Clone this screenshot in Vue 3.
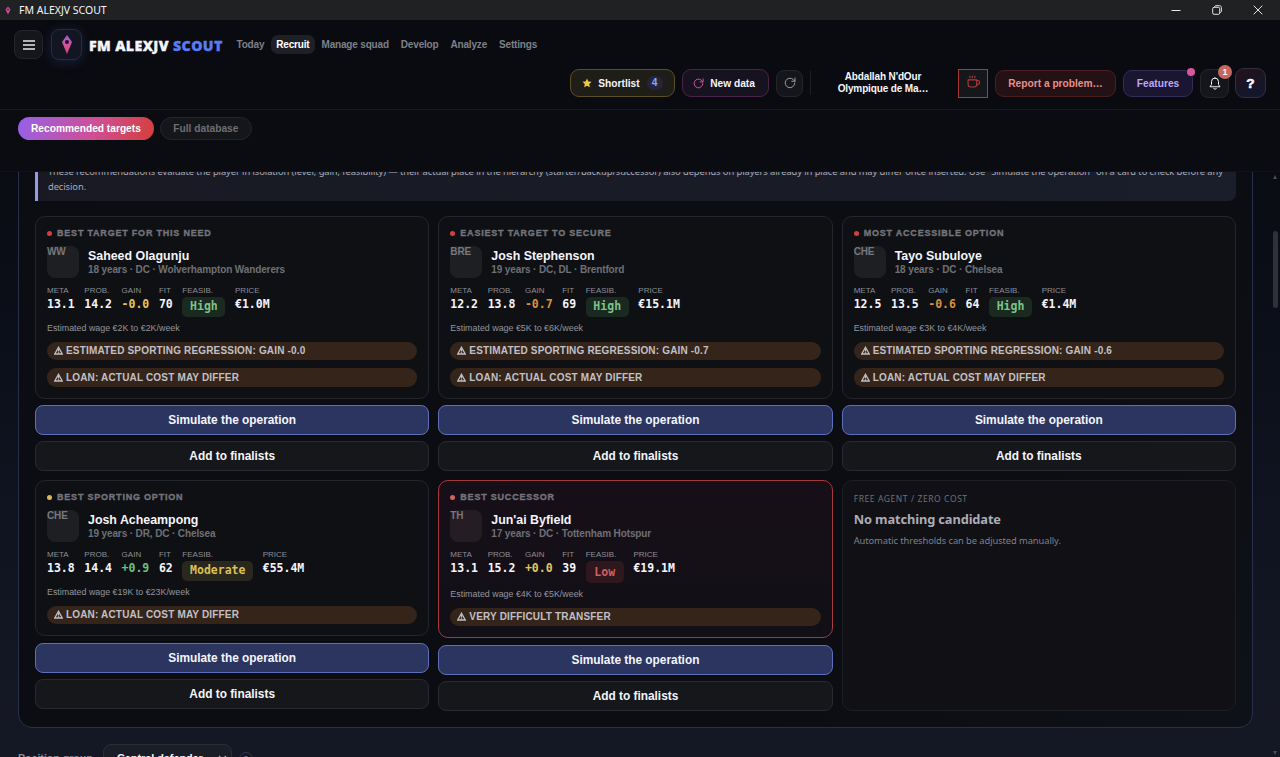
<template>
  <div class="app">
    <div class="titlebar">
      <svg class="titlebar-logo" viewBox="0 0 12 16">
        <path d="M6 0 L11 6 L6 16 L1 6 Z" fill="#d04a9c" />
        <circle cx="6" cy="6" r="1.6" fill="#141521" />
      </svg>
      <span class="titlebar-name">FM ALEXJV SCOUT</span>
      <div class="window-controls">
        <svg width="10" height="10" viewBox="0 0 10 10"><path d="M.5 5.5h9" /></svg>
        <svg width="10" height="10" viewBox="0 0 10 10">
          <rect x=".7" y="2.3" width="7" height="7" rx="1.4" />
          <path d="M2.6 2.2C2.6 1.2 3.1.7 4 .7h3.4c1.3 0 2 .7 2 2v3.4c0 .9-.5 1.4-1.5 1.4" />
        </svg>
        <svg width="10" height="10" viewBox="0 0 10 10"><path d="M.7.7l8.6 8.6M9.3.7L.7 9.3" /></svg>
      </div>
    </div>

    <header class="header">
      <div class="header-top">
        <button class="icon-btn menu-btn">
          <svg width="12" height="10" viewBox="0 0 12 10"><path d="M0 1h12M0 5h12M0 9h12" /></svg>
        </button>
        <div class="logo-box">
          <svg width="12" height="19" viewBox="0 0 12 19">
            <defs>
              <linearGradient id="pin" x1="0" y1="0" x2="0" y2="1">
                <stop offset="0" stop-color="#9a5ad6" />
                <stop offset=".5" stop-color="#d6539b" />
                <stop offset="1" stop-color="#d2457c" />
              </linearGradient>
            </defs>
            <path d="M6 0 L11 7 L6 19 L1 7 Z" fill="url(#pin)" />
            <circle cx="6" cy="7" r="2" fill="#171526" />
          </svg>
        </div>
        <div class="brand">FM ALEXJV <span>SCOUT</span></div>
        <nav class="nav">
          <a v-for="item in navItems" :key="item" :class="{ active: item === 'Recruit' }">{{ item }}</a>
        </nav>
      </div>

      <div class="header-tools">
        <button class="tool shortlist">
          <svg width="10" height="10" viewBox="0 0 24 24">
            <path d="M12 1l3.3 7.2 7.7.9-5.7 5.3 1.5 7.7L12 18.3l-6.8 3.8 1.5-7.7L1 9.1l7.7-.9z" fill="#ecca45" />
          </svg>
          Shortlist
          <span class="count">4</span>
        </button>
        <button class="tool new-data">
          <svg width="11" height="11" viewBox="0 0 24 24" class="stroke-icon">
            <path d="M21.5 12a9.5 9.5 0 1 1-3-7L22 8.5" /><path d="M22 2v6.5h-6.5" />
          </svg>
          New data
        </button>
        <button class="icon-btn refresh-btn">
          <svg width="12" height="12" viewBox="0 0 24 24" class="stroke-icon">
            <path d="M21.5 12a9.5 9.5 0 1 1-3-7L22 8.5" /><path d="M22 2v6.5h-6.5" />
          </svg>
        </button>
        <span class="divider"></span>
        <div class="account">
          <div>Abdallah N'dOur</div>
          <div>Olympique de Ma…</div>
        </div>
        <button class="coffee-btn">
          <svg width="13" height="13" viewBox="0 0 24 24" class="stroke-icon">
            <path d="M2 9h16v8a5 5 0 0 1-5 5H7a5 5 0 0 1-5-5z" />
            <path d="M18 10h2a3 3 0 0 1 3 3v1a4 4 0 0 1-4 4h-1" />
            <path d="M5.5 5V2M10 5V2M14.5 5V2" />
          </svg>
        </button>
        <button class="tool report">Report a problem…</button>
        <button class="tool features">Features<span class="dot"></span></button>
        <button class="icon-btn bell-btn">
          <svg width="12" height="13" viewBox="0 0 24 26" class="stroke-icon">
            <path d="M12 2a7 7 0 0 0-7 7v6l-3 4.5h20L19 15V9a7 7 0 0 0-7-7z" />
            <path d="M9.5 23a2.8 2.8 0 0 0 5 0" />
          </svg>
          <span class="badge">1</span>
        </button>
        <button class="help-btn">?</button>
      </div>
    </header>

    <div class="tabs">
      <button class="tab active">Recommended targets</button>
      <button class="tab">Full database</button>
    </div>

    <main class="content">
      <section class="panel">
        <div class="note">
          <div class="note-line">These recommendations evaluate the player in isolation (level, gain, feasibility) — their actual place in the hierarchy (starter/backup/successor) also depends on players already in place and may differ once inserted. Use "Simulate the operation" on a card to check before any</div>
          <div>decision.</div>
        </div>

        <div class="grid">
          <div v-for="card in cards" :key="card.title" class="slot">
            <article class="card" :class="{ danger: card.feasibility === 'Low' }">
              <div class="card-title"><i :class="card.dot"></i>{{ card.title }}</div>
              <div class="player">
                <div class="crest">{{ card.crest }}</div>
                <div>
                  <div class="player-name">{{ card.name }}</div>
                  <div class="player-sub">{{ card.info }}</div>
                </div>
              </div>
              <div class="stats">
                <div><label>META</label><b>{{ card.meta }}</b></div>
                <div><label>PROB.</label><b>{{ card.prob }}</b></div>
                <div><label>GAIN</label><b :class="card.gainTone">{{ card.gain }}</b></div>
                <div><label>FIT</label><b>{{ card.fit }}</b></div>
                <div class="feasib">
                  <label>FEASIB.</label>
                  <span class="pill" :class="card.feasibility.toLowerCase()">{{ card.feasibility }}</span>
                </div>
                <div><label>PRICE</label><b>{{ card.price }}</b></div>
              </div>
              <div class="wage">Estimated wage {{ card.wage }}/week</div>
              <div class="warnings">
                <div v-for="warning in card.warnings" :key="warning" class="warning">
                  <svg width="9" height="9" viewBox="0 0 18 18">
                    <path d="M9 2.5L16.5 16H1.5z" /><path d="M9 6v5M9 12.5V15" />
                  </svg>
                  {{ warning }}
                </div>
              </div>
            </article>
            <button class="action primary">Simulate the operation</button>
            <button class="action">Add to finalists</button>
          </div>

          <article class="card empty">
            <div class="empty-kicker">FREE AGENT / ZERO COST</div>
            <div class="empty-title">No matching candidate</div>
            <div class="empty-text">Automatic thresholds can be adjusted manually.</div>
          </article>
        </div>
      </section>

      <div class="filters">
        <span class="filter-label">Position group</span>
        <div class="select">
          Central defender
          <svg width="9" height="6" viewBox="0 0 9 6"><path d="M1 1l3.5 3.5L8 1" /></svg>
        </div>
        <span class="hint">?</span>
      </div>

      <div class="scrollbar">
        <i class="arrow up"></i>
        <i class="thumb"></i>
        <i class="arrow down"></i>
      </div>
    </main>
  </div>
</template>

<script setup>
const navItems = ['Today', 'Recruit', 'Manage squad', 'Develop', 'Analyze', 'Settings'];

const LOAN = 'LOAN: ACTUAL COST MAY DIFFER';

const cards = [
  {
    title: 'BEST TARGET FOR THIS NEED',
    dot: 'red',
    crest: 'WW',
    name: 'Saheed Olagunju',
    info: '18 years · DC · Wolverhampton Wanderers',
    meta: '13.1',
    prob: '14.2',
    gain: '-0.0',
    gainTone: 'flat',
    fit: 70,
    feasibility: 'High',
    price: '€1.0M',
    wage: '€2K to €2K',
    warnings: ['ESTIMATED SPORTING REGRESSION: GAIN -0.0', LOAN]
  },
  {
    title: 'EASIEST TARGET TO SECURE',
    dot: 'red',
    crest: 'BRE',
    name: 'Josh Stephenson',
    info: '19 years · DC, DL · Brentford',
    meta: '12.2',
    prob: '13.8',
    gain: '-0.7',
    gainTone: 'loss',
    fit: 69,
    feasibility: 'High',
    price: '€15.1M',
    wage: '€5K to €6K',
    warnings: ['ESTIMATED SPORTING REGRESSION: GAIN -0.7', LOAN]
  },
  {
    title: 'MOST ACCESSIBLE OPTION',
    dot: 'red',
    crest: 'CHE',
    name: 'Tayo Subuloye',
    info: '18 years · DC · Chelsea',
    meta: '12.5',
    prob: '13.5',
    gain: '-0.6',
    gainTone: 'loss',
    fit: 64,
    feasibility: 'High',
    price: '€1.4M',
    wage: '€3K to €4K',
    warnings: ['ESTIMATED SPORTING REGRESSION: GAIN -0.6', LOAN]
  },
  {
    title: 'BEST SPORTING OPTION',
    dot: 'amber',
    crest: 'CHE',
    name: 'Josh Acheampong',
    info: '19 years · DR, DC · Chelsea',
    meta: '13.8',
    prob: '14.4',
    gain: '+0.9',
    gainTone: 'up',
    fit: 62,
    feasibility: 'Moderate',
    price: '€55.4M',
    wage: '€19K to €23K',
    warnings: [LOAN]
  },
  {
    title: 'BEST SUCCESSOR',
    dot: 'rose',
    crest: 'TH',
    name: "Jun'ai Byfield",
    info: '17 years · DC · Tottenham Hotspur',
    meta: '13.1',
    prob: '15.2',
    gain: '+0.0',
    gainTone: 'flat',
    fit: 39,
    feasibility: 'Low',
    price: '€19.1M',
    wage: '€4K to €5K',
    warnings: ['VERY DIFFICULT TRANSFER']
  }
];
</script>

<style>
body {
  background: #0a0c11;
  overflow: hidden;
}
</style>

<style scoped>
* {
  box-sizing: border-box;
}

.app {
  width: 1280px;
  height: 757px;
  display: flex;
  flex-direction: column;
  overflow: hidden;
  background: #0a0b10;
  color: #f4f5fa;
  font-family: "Liberation Sans", Arial, sans-serif;
  font-size: 10.2px;
}

button {
  margin: 0;
  padding: 0;
  font: inherit;
  font-weight: 700;
  color: inherit;
  white-space: nowrap;
}

svg {
  display: block;
  flex: none;
}

.stroke-icon {
  fill: none;
  stroke: currentColor;
  stroke-width: 2;
  stroke-linecap: round;
  stroke-linejoin: round;
}

.titlebar {
  flex: none;
  height: 20px;
  display: flex;
  align-items: center;
  padding: 0 17px 0 5px;
  background: #202123;
}

.titlebar-logo {
  width: 6px;
  height: 9px;
}

.titlebar-name {
  margin-left: 8px;
  font-family: "Noto Sans", sans-serif;
  font-size: 10.5px;
}

.window-controls {
  margin-left: auto;
  display: flex;
  gap: 31px;
  fill: none;
  stroke: #e6e6e8;
  stroke-width: 1;
}

.header {
  flex: none;
  height: 90px;
  padding: 9px 14px 0;
  border-bottom: 1px solid #17191f;
}

.header-top {
  display: flex;
  align-items: center;
  height: 31px;
}

.icon-btn {
  display: flex;
  align-items: center;
  justify-content: center;
  background: #15161b;
  border: 1px solid #25262c;
  border-radius: 8px;
}

.menu-btn {
  width: 29px;
  height: 29px;
}

.menu-btn svg {
  stroke: #e8e9ee;
  stroke-width: 1.3;
}

.logo-box {
  width: 31px;
  height: 31px;
  margin-left: 8px;
  display: flex;
  align-items: center;
  justify-content: center;
  background: #131522;
  border: 1px solid #292c3c;
  border-radius: 8px;
  box-shadow: 0 2px 12px rgba(70, 90, 200, 0.25);
}

.brand {
  width: 134px;
  margin: 1px 0 0 7px;
  font-family: "Open Sans", "Noto Sans", sans-serif;
  font-size: 14.2px;
  font-weight: 800;
  letter-spacing: 0.38px;
  white-space: nowrap;
  -webkit-text-stroke: 0.3px;
}

.brand span {
  color: #5b7bf5;
}

.nav {
  display: flex;
  gap: 2px;
  margin-left: 8.5px;
  font-size: 10px;
  font-weight: 700;
  letter-spacing: -0.18px;
  color: #7e8087;
}

.nav a {
  height: 19px;
  padding: 0 5px;
  line-height: 19px;
  border-radius: 7px;
}

.nav .active {
  color: #fff;
  background: #1f2024;
}

.header-tools {
  display: flex;
  align-items: center;
  justify-content: flex-end;
  height: 30px;
  margin-top: 8px;
}

.tool {
  display: flex;
  align-items: center;
  justify-content: center;
  height: 28px;
  border: 1px solid;
  border-radius: 9px;
}

.shortlist {
  width: 105px;
  gap: 6px;
  background: #1f1d17;
  border-color: #5a4e22;
}

.shortlist .count {
  width: 16px;
  height: 14px;
  margin-left: 1px;
  border-radius: 7px;
  line-height: 14px;
  color: #8ba3ff;
  background: #24253a;
}

.new-data {
  width: 87px;
  margin-left: 7px;
  padding-right: 3px;
  gap: 6px;
  background: #171220;
  border-color: #4a2448;
}

.new-data svg {
  color: #e0569f;
}

.refresh-btn {
  width: 27px;
  height: 27px;
  margin-left: 7px;
  color: #9b9ca3;
}

.divider {
  width: 1px;
  height: 24px;
  margin-left: 7px;
  background: #1d1f25;
}

.account {
  width: 100px;
  margin: 0 25px 0 22px;
  font-size: 10px;
  font-weight: 700;
  line-height: 12px;
  letter-spacing: -0.13px;
  text-align: center;
  white-space: nowrap;
}

.coffee-btn {
  width: 30px;
  height: 29px;
  display: flex;
  align-items: center;
  justify-content: center;
  padding-bottom: 4px;
  color: #b03c3a;
  background: #15171b;
  border: 1px solid #a83a37;
}

.report {
  width: 121px;
  height: 27px;
  margin-left: 7px;
  color: #e5918b;
  background: #241115;
  border-color: #4b1f21;
}

.features {
  position: relative;
  width: 70px;
  height: 27px;
  margin-left: 7px;
  color: #bda6f5;
  background: #1a1530;
  border-color: #352c55;
}

.features .dot {
  position: absolute;
  top: -3px;
  right: -3px;
  width: 8px;
  height: 8px;
  border-radius: 50%;
  background: #d8559f;
}

.bell-btn {
  position: relative;
  width: 29px;
  height: 29px;
  margin-left: 7px;
}

.badge {
  position: absolute;
  top: -5px;
  right: -4px;
  width: 14px;
  height: 14px;
  border-radius: 50%;
  font-size: 9px;
  line-height: 14px;
  text-align: center;
  background: #c4685d;
}

.help-btn {
  width: 31px;
  height: 30px;
  margin-left: 6px;
  font-size: 13.6px;
  border: 1px solid #33303c;
  border-radius: 9px;
  -webkit-text-stroke: 0.6px #fff;
  background: linear-gradient(160deg, #221219, #121730);
}

.tabs {
  flex: none;
  display: flex;
  align-items: flex-start;
  gap: 6px;
  height: 62px;
  padding: 7px 18px 0;
  background: #0b0c11;
  border-bottom: 1px solid #101217;
}

.tab {
  height: 23px;
  padding: 0 12.5px;
  color: #6d6e74;
  background: #15161a;
  border: 1px solid #25262b;
  border-radius: 12px;
}

.tab.active {
  padding: 0 13px;
  color: #fff;
  border: 0;
  background: linear-gradient(110deg, #9561ea, #cf4f96 55%, #d43e3a);
}

.content {
  position: relative;
  flex: 1;
  min-height: 0;
  overflow: hidden;
  padding: 0 27px 0 18px;
  background: linear-gradient(180deg, #0a0c13 0%, #0c101b 35%, #121623 75%, #151824 100%);
}

.panel {
  margin-top: -41px;
  height: 597px;
  padding: 25px 16px 0;
  background: linear-gradient(135deg, #0c0d12 70%, #0e1118);
  border: 1px solid #27304a;
  border-radius: 14px;
}

.note {
  height: 44px;
  padding: 7px 0 0 10px;
  font-family: "Noto Sans", sans-serif;
  font-size: 9.35px;
  line-height: 15px;
  letter-spacing: -0.075px;
  color: #a9acb8;
  background: linear-gradient(90deg, #181923, #1a1e2a);
  border-left: 3px solid #949be6;
  border-radius: 0 8px 8px 0;
}

.note-line {
  white-space: nowrap;
}

.grid {
  display: grid;
  grid-template-columns: repeat(3, 1fr);
  gap: 9px;
  margin-top: 15px;
}

.slot {
  display: flex;
  flex-direction: column;
}

.card {
  padding: 11px;
  background: #0f1014;
  border: 1px solid #25262c;
  border-radius: 10px;
}

.card.danger {
  background: linear-gradient(180deg, #170f18, #120f17);
  border-color: #a5373e;
}

.card-title {
  display: flex;
  align-items: center;
  height: 10px;
  margin-top: -0.5px;
  font-size: 9px;
  font-weight: 700;
  letter-spacing: 0.79px;
  color: #73747a;
  -webkit-text-stroke: 0.35px #73747a;
}

.card-title i {
  width: 5px;
  height: 5px;
  margin: 2px 5px 0 0;
  border-radius: 50%;
}

.red {
  background: #d53f3f;
}

.amber {
  background: #e0b653;
}

.rose {
  background: #cf6263;
}

.player {
  display: flex;
  gap: 9px;
  margin-top: 8.5px;
}

.crest {
  width: 32px;
  height: 32px;
  font-size: 10px;
  font-weight: 700;
  line-height: 12px;
  letter-spacing: -0.15px;
  color: #77787d;
  background: #1e1f23;
  border-radius: 8px;
}

.danger .crest {
  background: #251d24;
}

.player-name {
  margin-top: 3px;
  font-size: 12.4px;
  font-weight: 700;
  line-height: 14px;
}

.player-sub {
  font-size: 10px;
  font-weight: 700;
  line-height: 13px;
  letter-spacing: -0.12px;
  color: #6e7076;
}

.stats {
  display: flex;
  align-items: flex-start;
  gap: 9.6px;
  margin-top: 8px;
}

.stats label {
  display: block;
  height: 11px;
  font-size: 8px;
  line-height: 10px;
  color: #8c8e96;
}

.stats b,
.pill {
  display: block;
  font-family: "DejaVu Sans Mono", monospace;
  font-size: 11.5px;
  font-weight: 700;
  line-height: 14px;
}

.flat {
  color: #e3c65c;
}

.loss {
  color: #d9923f;
}

.up {
  color: #6cc17b;
}

.feasib {
  min-width: 31px;
}

.pill {
  height: 19.5px;
  padding: 0 7.7px;
  line-height: 19.5px;
  border-radius: 5px;
}

.high {
  color: #7cc389;
  background: #1b2a20;
}

.moderate {
  color: #dcc154;
  background: #2a271e;
}

.low {
  height: 21.5px;
  padding: 0 8.7px;
  line-height: 22px;
  color: #d25e60;
  background: #2f171e;
}

.wage {
  height: 11px;
  margin-top: 6.5px;
  font-size: 8.9px;
  line-height: 11px;
  color: #93959d;
}

.warnings {
  display: flex;
  flex-direction: column;
  gap: 8px;
  margin-top: 7.5px;
}

.warning {
  display: flex;
  align-items: center;
  gap: 3px;
  height: 18.5px;
  padding-left: 7px;
  font-size: 10px;
  font-weight: 700;
  letter-spacing: 0.17px;
  color: #c1c0c6;
  background: #35241a;
  border-radius: 9px;
}

.warning svg {
  fill: none;
  stroke: currentColor;
  stroke-width: 2.6;
}

.action {
  height: 30px;
  margin-top: 6px;
  font-size: 11.87px;
  background: #15171b;
  border: 1px solid #282a2f;
  border-radius: 8px;
}

.action.primary {
  margin-top: 6.5px;
  background: #2b355f;
  border-color: #5d6fba;
}

.empty {
  background: #101015;
  border-color: #1d1e25;
  font-family: "Noto Sans", sans-serif;
}

.empty-kicker {
  font-size: 8.5px;
  line-height: 13px;
  letter-spacing: 0.58px;
  color: #6f7179;
}

.empty-title {
  margin-top: 6px;
  font-size: 12.8px;
  font-weight: 700;
  line-height: 17px;
  letter-spacing: -0.1px;
  color: #acacb6;
}

.empty-text {
  margin-top: 6px;
  font-size: 9.35px;
  line-height: 13px;
  letter-spacing: -0.08px;
  color: #7f818b;
}

.filters {
  display: flex;
  align-items: center;
  height: 29px;
  margin-top: 16px;
  font-weight: 700;
}

.filter-label {
  width: 85px;
  font-size: 10.6px;
  line-height: 12px;
  padding-bottom: 1px;
  color: #8a8c95;
}

.select {
  width: 129px;
  height: 29px;
  display: flex;
  align-items: center;
  gap: 15px;
  padding: 0 0 1px 13px;
  font-size: 10.8px;
  white-space: nowrap;
  background: #1b1d27;
  border: 1px solid #2b2e3a;
  border-radius: 8px;
}

.select svg {
  fill: none;
  stroke: #b9bbc5;
  stroke-width: 1.2;
}

.hint {
  width: 14px;
  height: 14px;
  margin-left: 7px;
  border: 1px solid #343743;
  border-radius: 50%;
  font-size: 8px;
  line-height: 12px;
  text-align: center;
  color: #777983;
}

.scrollbar {
  position: absolute;
  top: 0;
  right: 0;
  bottom: 0;
  width: 9px;
}

.scrollbar i {
  position: absolute;
}

.thumb {
  top: 59px;
  left: 2px;
  width: 5px;
  height: 77px;
  border-radius: 3px;
  background: #2e303c;
}

.arrow {
  left: 2px;
  border: 2.5px solid transparent;
}

.arrow.up {
  top: 1px;
  border-bottom: 4px solid #4a4c55;
}

.arrow.down {
  bottom: 0;
  border-top: 4px solid #4a4c55;
}
</style>
